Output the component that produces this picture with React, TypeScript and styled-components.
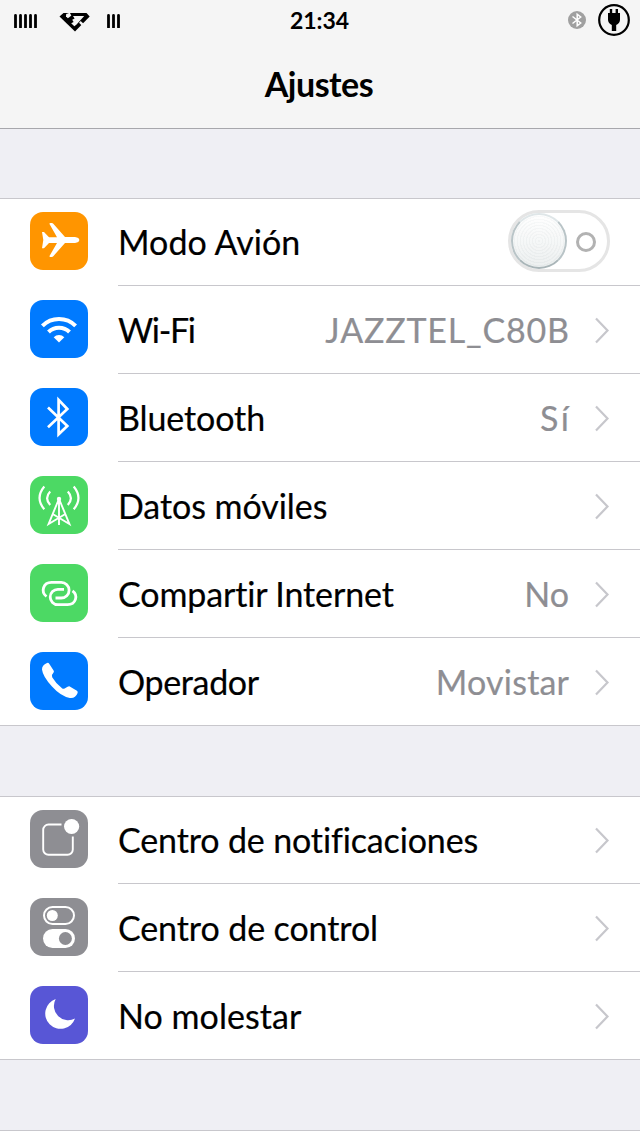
import React from 'react';
import styled, { createGlobalStyle } from 'styled-components';

const GlobalStyle = createGlobalStyle`
  * { box-sizing: border-box; }
  body { margin: 0; background: #efeff4; overflow: hidden; }
`;

const Screen = styled.main`
  width: 640px;
  height: 1136px;
  display: flex;
  flex-direction: column;
  overflow: hidden;
  background: #efeff4;
  color: #000;
  font-family: Lato, 'Open Sans', sans-serif;
  font-variant-ligatures: none;
`;

const Header = styled.header`
  flex: none;
  height: 129px;
  background: #f5f5f5;
  border-bottom: 1px solid #a7a7ac;
`;

const StatusBar = styled.div`
  height: 40px;
  display: grid;
  grid-template-columns: 1fr auto 1fr;
  align-items: center;
  padding: 0 10px 0 14px;
`;

const StatusSide = styled.div<{ $end?: boolean }>`
  display: flex;
  align-items: center;
  justify-content: ${(p) => (p.$end ? 'flex-end' : 'flex-start')};
  gap: ${(p) => (p.$end ? '12px' : '0')};
`;

const Clock = styled.time`
  padding-right: 5px;
  font-size: 23px;
  font-weight: 700;
  line-height: 40px;
  letter-spacing: -0.1px;
`;

const Title = styled.h1`
  margin: 0;
  height: 88px;
  padding-right: 2px;
  line-height: 88px;
  text-align: center;
  font-size: 34px;
  font-weight: 700;
  letter-spacing: -0.5px;
`;

const Group = styled.section<{ $gap: number }>`
  flex: none;
  margin-top: ${(p) => p.$gap}px;
  background: #fff;
  box-shadow: inset 0 1px #c8c7cc, inset 0 -1px #c8c7cc;
`;

const Row = styled.div`
  height: 88px;
  display: flex;
  padding-left: 30px;
`;

const Tile = styled.div<{ $color: string }>`
  flex: none;
  width: 58px;
  height: 58px;
  margin: 14px 30px 0 0;
  border-radius: 13px;
  background: ${(p) => p.$color};
  svg { display: block; }
`;

const RowBody = styled.div`
  flex: 1;
  display: flex;
  align-items: center;
  padding-right: 30px;
  border-bottom: 1px solid #c8c7cc;
`;

const Label = styled.span<{ $spacing: number }>`
  flex: 1;
  padding-top: 1px;
  font-size: 34px;
  line-height: 44px;
  white-space: nowrap;
  letter-spacing: ${(p) => p.$spacing}px;
  -webkit-text-stroke: 0.2px currentColor;
`;

const Value = styled(Label)`
  flex: none;
  color: #8e8e93;
  margin-right: ${(p) => 25 - p.$spacing}px;
`;

const Track = styled.div`
  width: 102px;
  height: 62px;
  margin-top: -2px;
  display: flex;
  align-items: center;
  gap: 9px;
  border: 3px solid #e5e5e5;
  border-radius: 31px;
  background: #fff;
`;

const Knob = styled.div`
  width: 56px;
  height: 56px;
  border-radius: 50%;
  border: 2px solid #b9c4c7;
  border-top-color: #dfe6e8;
  border-bottom-color: #a9b5b8;
  background:
    repeating-radial-gradient(circle, rgba(215, 220, 222, 0.16) 0 1px, rgba(255, 255, 255, 0.2) 1.5px 3px),
    linear-gradient(#ffffff, #e8ecec);
`;

const OffMark = styled.div`
  width: 20px;
  height: 20px;
  margin-top: 2px;
  border: 3px solid #b2b2b2;
  border-radius: 50%;
`;

const Bars = ({ count }: { count: number }) => (
  <svg width={count * 5 - 1} height="16" viewBox={`0 0 ${count * 5 - 1} 16`} stroke="#000" strokeWidth="2.8" strokeLinecap="round">
    {Array.from({ length: count }, (_, i) => (
      <path key={i} d={`M${1.5 + i * 5} 3.500V15.300`} />
    ))}
  </svg>
);

const DiamondLogo = styled.svg`
  margin: 3px 16px 0 21px;
`;

const Diamond = () => (
  <DiamondLogo width="32" height="20" viewBox="0 0 32 20">
    <path d="M4.500 1H27.500L30.700 4.500L16 19.500L.5 4.500Z" />
    <g fill="#f5f5f5">
      <path d="M14 4H25.200L20.500 9.200L17.300 12.700L15.300 14.200L12.200 11.200L14.600 10L13.200 7.800L15.600 6.500Z" />
      <path d="M7.200 2L10.800.8L12.300 3.500L10.300 5.200L8.800 6.200L7 4.300Z" />
      <path d="M21.700 9L24.500 11.700L22.700 13.500L20 10.800Z" />
    </g>
  </DiamondLogo>
);

const StatusBluetooth = () => (
  <svg width="18" height="18" viewBox="0 0 18 18" fill="none">
    <circle cx="9" cy="9" r="9" fill="#a0a0a0" />
    <path d="M4.500 5.500L12.700 12L9.200 14.800V3.200L12.700 6L4.500 12.500" stroke="#fff" strokeWidth="1.500" />
  </svg>
);

const Plug = () => (
  <svg width="32" height="32" viewBox="0 0 32 32">
    <circle cx="16" cy="16" r="14.800" fill="none" stroke="#000" strokeWidth="2.200" />
    <path d="M11.800 5h2.400v4h3.400V5H20v4h2v6.800q0 3.200-3.800 5.200V27h-4.400v-6q-3.800-2-3.800-5.200V9h1.800z" />
  </svg>
);

const glyphs: Record<string, React.ReactNode> = {
  plane: <path d="M12 20h2l5 5.200h8L19.500 12q-.3-1 1-1h1.300q.9 0 1.500.8L35 25H45q4.300.6 4.300 3T45 31H35L23.300 44.200q-.6.8-1.500.8h-1.300q-1.300 0-1-1L27 31H19l-5 5.300H12l1.300-8.300z" fill="#fff" />,
  wifi: (
    <g fill="none" stroke="#fff" strokeWidth="4">
      <path d="M12.400 25.900A23.500 23.500 0 0 1 45.600 25.900M18.500 32A14.800 14.800 0 0 1 39.500 32" />
      <path d="M29 42.500L23.700 37.200A7.500 7.500 0 0 1 34.300 37.200Z" fill="#fff" stroke="none" />
    </g>
  ),
  bluetooth: <path d="M18 19.500L37.300 38L28.600 46.300V11.900L37.300 21L18 39.300" fill="none" stroke="#fff" strokeWidth="2.700" />,
  tower: (
    <g fill="none" stroke="#fff" strokeWidth="1.900">
      <path d="M14.300 10.500Q4.800 22 14.300 33.300M43.700 10.500Q53.200 22 43.700 33.300M20.200 15.500Q14 22.200 20.200 29M37.800 15.500Q44 22.200 37.800 29" strokeWidth="2.200" />
      <path d="M29 23V49M28.500 24L18.600 48L34.500 38.500M29.500 24L39.400 48L23.500 38.500" />
      <circle cx="29" cy="23" r="2.200" fill="#fff" stroke="none" />
    </g>
  ),
  link: (
    <path d="M16.500 32.500C10.500 28 13 18.400 21.500 18.400H31.300A7.800 7.800 0 0 1 31.300 34H25.500M42.500 26.800C48.500 31.300 46 40.700 37.500 40.700H27.900A7.700 7.700 0 0 1 27.900 25.300H34" fill="none" stroke="#fff" strokeWidth="2.800" />
  ),
  phone: <path d="M17 11.100q1.300-.7 2.200.6l4.400 6.700q.8 1.200-.2 2.300-2.400 2.300-1.200 4.500Q25.500 31 32 36.300q1.200.9 2.600.2l3-1.700q1.600-.9 3 .1l6.300 3.900q1.200.9.700 2.200-2.300 5.800-7.800 5Q30.500 44 22 34.500 12.800 24.500 12 17.500 11.800 13.500 17 11.100z" fill="#fff" />,
  notifications: (
    <>
      <path d="M31.500 14.500H18.500a5.300 5.300 0 0 0-5.300 5.300V39.500a5.300 5.300 0 0 0 5.300 5.300H37.500a5.300 5.300 0 0 0 5.300-5.300V26.500" fill="none" stroke="#fff" strokeWidth="1.900" />
      <circle cx="41.600" cy="16.500" r="7.600" fill="#fff" />
    </>
  ),
  control: (
    <>
      <rect x="14" y="9" width="30" height="17" rx="8.500" fill="none" stroke="#fff" strokeWidth="2" />
      <circle cx="22.300" cy="17.500" r="5.500" fill="#fff" />
      <rect x="13" y="31" width="32" height="19" rx="9.500" fill="#fff" />
      <circle cx="35.400" cy="40.500" r="6.500" fill="#8e8e93" />
    </>
  ),
  moon: <path d="M25.700 13A15.300 15.300 0 1 0 45 32.500A14.300 14.300 0 0 1 25.700 13Z" fill="#fff" />,
};

const Chevron = () => (
  <svg width="16" height="28" viewBox="0 0 16 28" fill="none" stroke="#c7c7cc" strokeWidth="2.200">
    <path d="M2 2.500L13.500 14.500L2 26.500" />
  </svg>
);

type Item = { icon: string; color: string; label: string; spacing?: number; value?: string; valueSpacing?: number; toggle?: boolean };

const connectivity: Item[] = [
  { icon: 'plane', color: '#ff9500', label: 'Modo Avión', spacing: 0.05, toggle: true },
  { icon: 'wifi', color: '#007aff', label: 'Wi-Fi', spacing: -1.3, value: 'JAZZTEL_C80B', valueSpacing: 0.8 },
  { icon: 'bluetooth', color: '#007aff', label: 'Bluetooth', spacing: -0.1, value: 'Sí', valueSpacing: 2.5 },
  { icon: 'tower', color: '#4cd964', label: 'Datos móviles', spacing: -0.05 },
  { icon: 'link', color: '#4cd964', label: 'Compartir Internet', spacing: -0.13, value: 'No' },
  { icon: 'phone', color: '#007aff', label: 'Operador', spacing: -0.35, value: 'Movistar', valueSpacing: 0.2 },
];

const centers: Item[] = [
  { icon: 'notifications', color: '#8e8e93', label: 'Centro de notificaciones', spacing: -0.14 },
  { icon: 'control', color: '#8e8e93', label: 'Centro de control', spacing: -0.1 },
  { icon: 'moon', color: '#5856d6', label: 'No molestar', spacing: 0.05 },
];

const SettingRow = ({ item }: { item: Item }) => (
  <Row>
    <Tile $color={item.color}>
      <svg width="58" height="58" viewBox="0 0 58 58">{glyphs[item.icon]}</svg>
    </Tile>
    <RowBody>
      <Label $spacing={item.spacing ?? 0}>{item.label}</Label>
      {item.value && <Value $spacing={item.valueSpacing ?? 0}>{item.value}</Value>}
      {item.toggle ? (
        <Track>
          <Knob />
          <OffMark />
        </Track>
      ) : (
        <Chevron />
      )}
    </RowBody>
  </Row>
);

export default function App() {
  return (
    <Screen>
      <GlobalStyle />
      <Header>
        <StatusBar>
          <StatusSide>
            <Bars count={5} />
            <Diamond />
            <Bars count={3} />
          </StatusSide>
          <Clock>21:34</Clock>
          <StatusSide $end>
            <StatusBluetooth />
            <Plug />
          </StatusSide>
        </StatusBar>
        <Title>Ajustes</Title>
      </Header>
      <Group $gap={69}>
        {connectivity.map((item) => <SettingRow key={item.label} item={item} />)}
      </Group>
      <Group $gap={70}>
        {centers.map((item) => <SettingRow key={item.label} item={item} />)}
      </Group>
      <Group $gap={70}>
        <Row />
      </Group>
    </Screen>
  );
}
